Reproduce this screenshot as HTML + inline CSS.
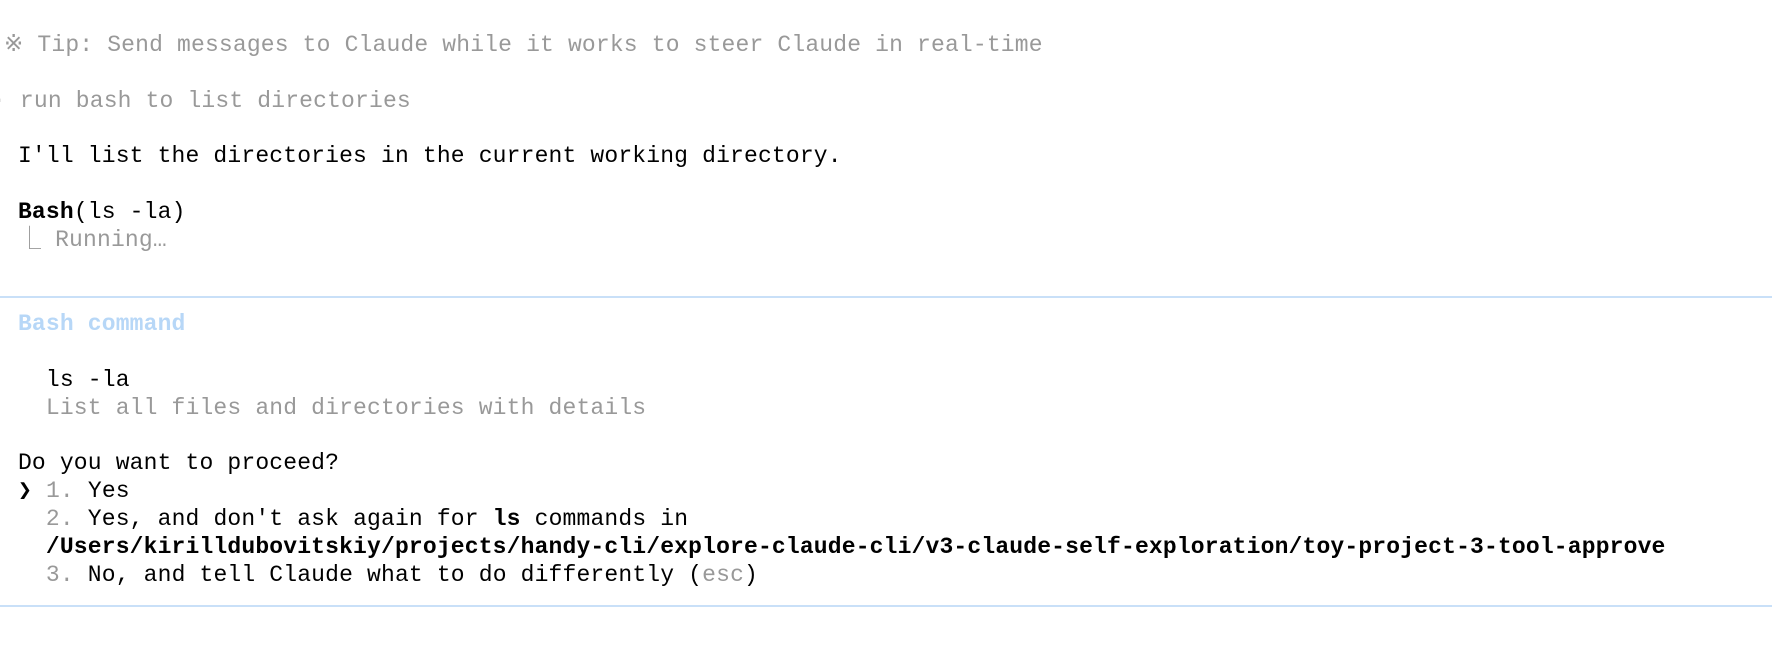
<!DOCTYPE html>
<html><head><meta charset="utf-8"><style>
html,body{margin:0;padding:0;background:#fff;width:1772px;height:652px;overflow:hidden;position:relative}
.l{position:absolute;left:4px;height:28px;line-height:28px;font-family:"Liberation Mono",monospace;font-size:23px;letter-spacing:0.16px;white-space:pre;color:#000}
.g{color:#999}
.b{font-weight:bold}
.blue{color:#b7d7f7;font-weight:bold}
.hr{position:absolute;left:0;width:1772px;height:2px;background:#c9e0f8}
</style></head><body>
<div class="l g" style="top:31px">※ Tip: Send messages to Claude while it works to steer Claude in real-time</div>
<div class="l g" style="top:87px;left:-8px">· run bash to list directories</div>
<div class="l" style="top:142px"> I'll list the directories in the current working directory.</div>
<div class="l" style="top:198px"> <span class="b">Bash</span>(ls -la)</div>
<div class="l" style="top:226px"> <span class="g">⎿ Running…</span></div>
<div class="hr" style="top:296px"></div>
<div class="l" style="top:310px"> <span class="blue">Bash command</span></div>
<div class="l" style="top:366px">   ls -la</div>
<div class="l g" style="top:394px">   List all files and directories with details</div>
<div class="l" style="top:449px"> Do you want to proceed?</div>
<div class="l" style="top:477px"> <span class="b">❯</span> <span class="g">1.</span> Yes</div>
<div class="l" style="top:505px">   <span class="g">2.</span> Yes, and don't ask again for <span class="b">ls</span> commands in</div>
<div class="l b" style="top:533px">   /Users/kirilldubovitskiy/projects/handy-cli/explore-claude-cli/v3-claude-self-exploration/toy-project-3-tool-approve</div>
<div class="l" style="top:561px">   <span class="g">3.</span> No, and tell Claude what to do differently (<span class="g">esc</span>)</div>
<div class="hr" style="top:605px"></div>
</body></html>
